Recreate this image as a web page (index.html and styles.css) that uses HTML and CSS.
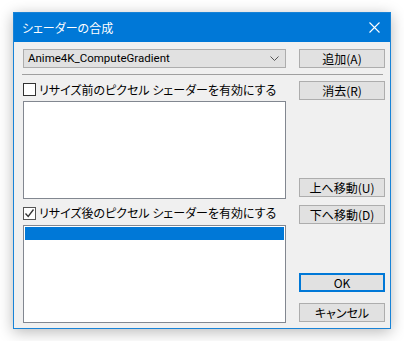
FILE: index.html
```html
<!DOCTYPE html>
<html lang="ja">
<head>
<meta charset="utf-8">
<link rel="stylesheet" href="styles.css">
</head>
<body>
<div class="window">
  <div class="titlebar">
    <span class="title">シェーダーの合成</span>
    <svg class="close" width="11" height="11" viewBox="0 0 11 11"><path d="M0.5 0.5L10.5 10.5M10.5 0.5L0.5 10.5" stroke="#fff" stroke-width="1.1" fill="none"/></svg>
  </div>
  <div class="content">
    <div class="toprow">
      <div class="combo">
        <span>Anime4K_ComputeGradient</span>
        <svg class="chev" width="9" height="5" viewBox="0 0 9 5"><path d="M0.5 0.5L4.5 4.5L8.5 0.5" stroke="#555" stroke-width="1" fill="none"/></svg>
      </div>
      <button class="btn">追加(A)</button>
    </div>
    <div class="sep"></div>
    <div class="lower">
      <div class="leftcol">
        <label class="cbrow cbrow1">
          <span class="cb"></span>
          <span class="cbtext">リサイズ前のピクセル シェーダーを有効にする</span>
        </label>
        <div class="list"></div>
        <label class="cbrow cbrow2">
          <span class="cb cb-checked"><svg width="11" height="11" viewBox="0 0 11 11"><path d="M1.5 5.5L4.2 8.5L9.5 1.5" stroke="#333" stroke-width="1.3" fill="none"/></svg></span>
          <span class="cbtext">リサイズ後のピクセル シェーダーを有効にする</span>
        </label>
        <div class="list"><div class="sel"></div></div>
      </div>
      <div class="rightcol">
        <button class="btn">消去(R)</button>
        <button class="btn btn-up">上へ移動(U)</button>
        <button class="btn btn-down">下へ移動(D)</button>
        <button class="btn btn-ok">OK</button>
        <button class="btn btn-cancel">キャンセル</button>
      </div>
    </div>
  </div>
</div>
</body>
</html>
```

FILE: styles.css
```css
* { box-sizing: border-box; }
html, body { margin: 0; padding: 0; background: #fff; }
body {
  padding: 12px 13px;
  font-family: "Noto Sans CJK JP", "Noto Sans", sans-serif;
  font-size: 12px;
  font-feature-settings: "palt";
  color: #000;
}
.window {
  width: 378px;
  height: 317px;
  border: 1px solid #1883d7;
  background: #f0f0f0;
  box-shadow: 0 3px 14px rgba(0,0,0,0.28);
  display: flex;
  flex-direction: column;
}
.titlebar {
  height: 29px;
  background: #0078d7;
  display: flex;
  align-items: center;
  justify-content: space-between;
  padding: 0 10px 0 8px;
  color: #fff;
}
.title { font-size: 12px; line-height: 14px; }
.close { display: block; }
.content {
  flex: 1;
  padding: 7px 5px 0 9px;
}
.toprow {
  display: flex;
  gap: 13px;
}
.combo {
  width: 263px;
  height: 19px;
  background: #e1e1e1;
  border: 1px solid #adadad;
  display: flex;
  align-items: center;
  justify-content: space-between;
  padding: 0 6px 0 4px;
  font-family: Roboto, "Noto Sans CJK JP", sans-serif;
  font-size: 11.5px;
  line-height: 17px;
}
.chev { display: block; }
.btn {
  width: 86px;
  height: 19px;
  background: #e1e1e1;
  border: 1px solid #adadad;
  padding: 0;
  margin: 0;
  font: inherit;
  font-feature-settings: "palt";
  line-height: 16px;
  color: #000;
}
.sep {
  height: 1px;
  background: #a0a0a0;
  margin: 6px 2px 6px -1px;
}
.lower {
  display: flex;
  gap: 13px;
}
.leftcol {
  width: 263px;
  display: flex;
  flex-direction: column;
}
.cbrow {
  display: flex;
  align-items: center;
  gap: 3px;
  height: 20px;
}
.cbrow1 { padding-bottom: 3px; }
.cbrow2 { height: 26px; padding-top: 2px; }
.cb {
  width: 13px;
  height: 13px;
  border: 1px solid #333;
  background: #fff;
  display: flex;
  align-items: center;
  justify-content: center;
}
.cb-checked { border-color: #555; }
.cb svg { display: block; }
.cbtext { line-height: 14px; }
.list {
  height: 98px;
  background: #fff;
  border: 1px solid #828790;
  padding: 1px;
}
.sel {
  height: 13px;
  background: #0078d7;
}
.rightcol {
  display: flex;
  flex-direction: column;
}
.btn-up { margin-top: 78px; }
.btn-down { margin-top: 8px; }
.btn-ok { margin-top: 49px; border: 2px solid #0078d7; }
.btn-cancel { margin-top: 11px; }
```
